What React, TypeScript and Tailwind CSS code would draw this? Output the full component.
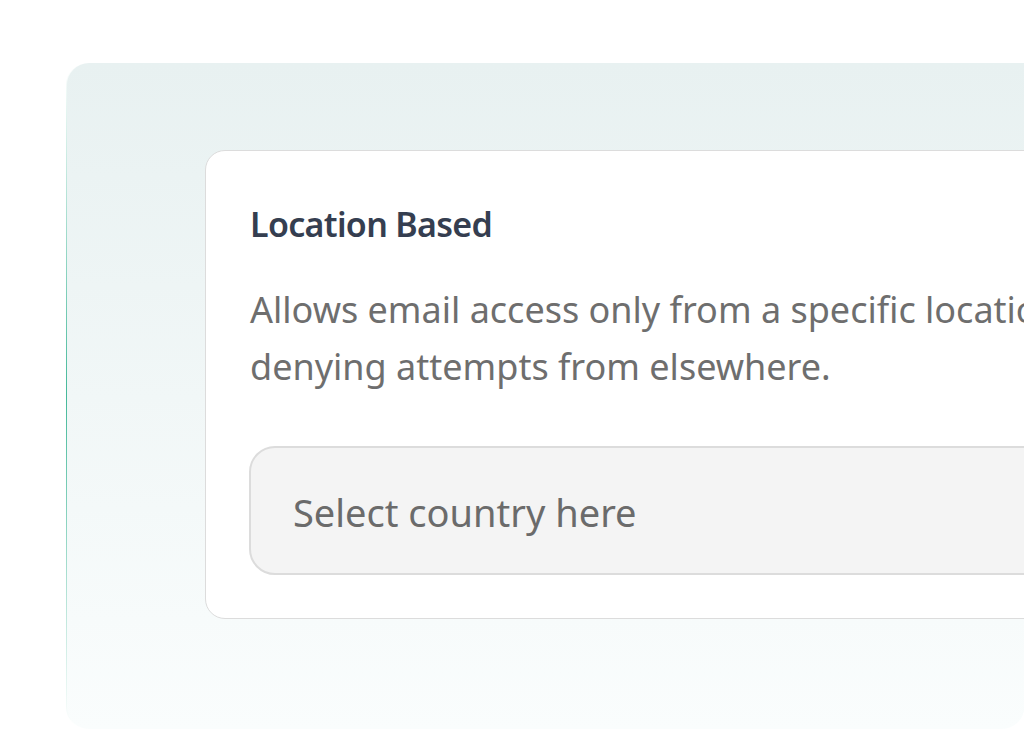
import React from "react";

export default function App() {
  return (
    <div className="w-[1024px] h-[729px] overflow-hidden bg-white" style={{ fontFamily: '"Noto Sans", "Open Sans", sans-serif' }}>
      <div className="ml-[66px] mt-[63px] h-[666px] rounded-[22px] rounded-tr-none bg-gradient-to-b from-transparent via-[#45b99a] to-transparent pl-px">
        <div className="h-full rounded-[22px] rounded-tr-none bg-gradient-to-b from-[#e8f1f1] to-[#fafdfd] pl-[138px] pt-[87px]">
          <div className="w-[1000px] rounded-[20px] border border-[#dcdcdc] bg-white px-[43px] pt-[53px] pb-[43px]">
            <h2 className="pl-px text-[34px] font-semibold leading-[1.2] tracking-[-0.02em] text-[#353e50]">Location Based</h2>
            <p className="mt-[36px] pl-px text-[36px] leading-[57px] text-[#6e6e6e] whitespace-nowrap">
              Allows email access only from a specific location,
              <br />
              denying attempts from elsewhere.
            </p>
            <div className="mt-[51px] flex h-[129px] items-center rounded-[26px] border-2 border-[#dcdcdc] bg-[#f4f4f4] pl-[42px] pt-[5px]">
              <span className="text-[38px] text-[#6b6b6b]">Select country here</span>
            </div>
          </div>
        </div>
      </div>
    </div>
  );
}
